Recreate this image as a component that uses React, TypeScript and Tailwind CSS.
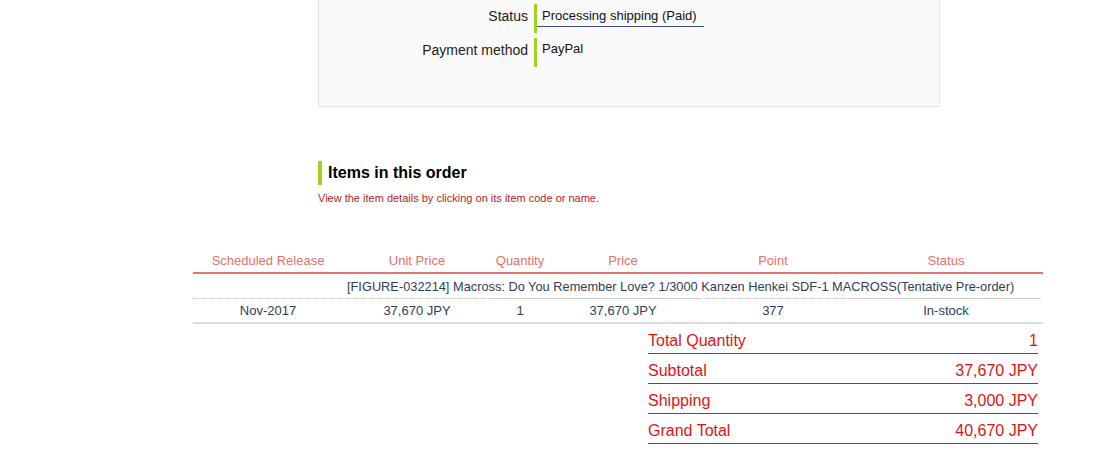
const font = { fontFamily: '"Liberation Sans", Arial, sans-serif' };

const columns = [
  { label: "Scheduled Release", width: "w-[150px]" },
  { label: "Unit Price", width: "w-[148px]" },
  { label: "Quantity", width: "w-[58px]" },
  { label: "Price", width: "w-[148px]" },
  { label: "Point", width: "w-[152px]" },
  { label: "Status", width: "w-[194px]" },
];

const row = ["Nov-2017", "37,670 JPY", "1", "37,670 JPY", "377", "In-stock"];

const totals = [
  { label: "Total Quantity", value: "1" },
  { label: "Subtotal", value: "37,670 JPY" },
  { label: "Shipping", value: "3,000 JPY" },
  { label: "Grand Total", value: "40,670 JPY" },
];

function InfoRow({ label, children }: { label: string; children: React.ReactNode }) {
  return (
    <div className="flex items-stretch h-[29px]">
      <div className="w-[215px] shrink-0 text-right pr-[6px] pt-[4px] text-[14px] leading-[16px] text-[#222]">
        {label}
      </div>
      <div className="w-[3px] shrink-0 bg-[#a6d01f]" />
      {children}
    </div>
  );
}

export default function App() {
  return (
    <div className="w-[1100px] h-[470px] bg-white overflow-hidden" style={font}>
      {/* order info panel */}
      <div className="ml-[318px] w-[622px] h-[107px] bg-[#f9f9f9] border border-t-0 border-[#e4e4e4] pt-[4px]">
        <InfoRow label="Status">
          <div className="self-start">
            <div className="w-[167px] pl-[5px] pt-[4px] pb-[3px] text-[13px] leading-[15px] text-[#111] border-b border-[#3d4a8c]">
              Processing shipping (Paid)
            </div>
          </div>
        </InfoRow>
        <div className="h-[5px]" />
        <InfoRow label="Payment method">
          <div className="pl-[5px] pt-[3px] text-[13px] leading-[15px] text-[#111]">PayPal</div>
        </InfoRow>
      </div>

      {/* heading */}
      <div className="ml-[318px] mt-[54px] flex items-center">
        <div className="w-[4px] h-[24px] bg-[#a6d01f]" />
        <h2 className="ml-[6px] text-[16px] leading-[24px] font-bold text-black">Items in this order</h2>
      </div>
      <p className="ml-[318px] mt-[7px] text-[11px] leading-[13px] text-[#b8262c]">
        View the item details by clicking on its item code or name.
      </p>

      {/* items table */}
      <div className="ml-[193px] w-[850px] mt-[45px] text-[13px]">
        <div className="flex h-[24px] border-b-2 border-[#e07673] text-[#e86f6c]">
          {columns.map((c) => (
            <div key={c.label} className={`${c.width} text-center leading-[22px]`}>
              {c.label}
            </div>
          ))}
        </div>
        <div className="flex h-[24px] text-[#2f3e55]">
          <div className="w-[150px]" />
          <div className="flex-1 pl-[4px] text-[12.8px] leading-[25px] whitespace-nowrap">
            [FIGURE-032214] Macross: Do You Remember Love? 1/3000 Kanzen Henkei SDF-1 MACROSS(Tentative Pre-order)
          </div>
        </div>
        <div className="flex">
          <div className="w-[298px] border-t border-dotted border-[#b8b8b8]" />
          <div className="w-[206px] border-t border-[#cfcfcf]" />
          <div className="w-[152px] border-t border-dotted border-[#b8b8b8]" />
          <div className="w-[192px] border-t border-[#cfcfcf]" />
        </div>
        <div className="flex h-[25px] border-b-2 border-[#dcdcdc] text-[#2f3e55]">
          {columns.map((c, i) => (
            <div key={c.label} className={`${c.width} text-center leading-[23px]`}>
              {row[i]}
            </div>
          ))}
        </div>
      </div>

      {/* totals */}
      <div className="ml-[648px] w-[390px] text-[16px] text-[#e01414]">
        {totals.map((t) => (
          <div key={t.label} className="flex justify-between h-[30px] pt-[2px] border-b border-[#d81a1a] leading-[30px]">
            <span>{t.label}</span>
            <span>{t.value}</span>
          </div>
        ))}
      </div>
    </div>
  );
}
